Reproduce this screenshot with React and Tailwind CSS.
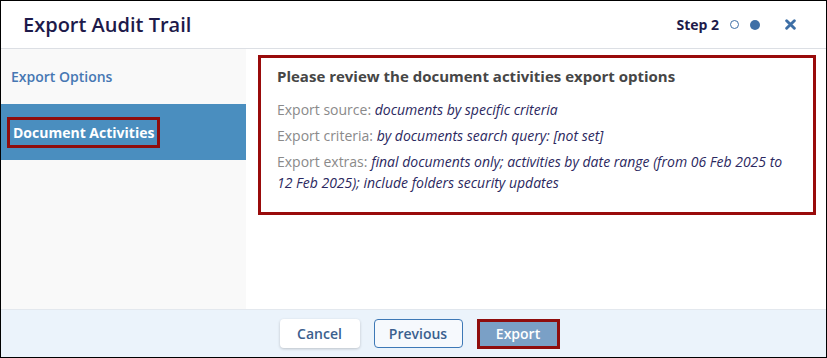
import React from "react";

const font = { fontFamily: "'Open Sans', 'Noto Sans', sans-serif" };

function Header() {
  return (
    <div className="flex h-[48px] items-center justify-between border-b border-[#dcdfe4] bg-white pl-[22px] pr-[30px]">
      <h1 className="text-[20px] font-semibold text-[#1d1a4a]">Export Audit Trail</h1>
      <div className="flex items-center">
        <span className="text-[14px] font-bold text-[#1d1a4a]">Step 2</span>
        <span className="ml-[11px] h-[9px] w-[9px] rounded-full border border-[#3e6fa6]" />
        <span className="ml-[11px] h-[10px] w-[10px] rounded-full bg-[#3e6fa6]" />
        <svg className="ml-[25px]" width="11" height="11" viewBox="0 0 10 10">
          <path d="M1.5 1.5 L8.5 8.5 M8.5 1.5 L1.5 8.5" stroke="#3e6fa6" strokeWidth="2.6" strokeLinecap="round" />
        </svg>
      </div>
    </div>
  );
}

function Sidebar() {
  return (
    <div className="flex w-[245px] flex-col bg-[#f9f9f9] pt-[17px]">
      <div className="pl-[10px] text-[14px] font-semibold text-[#4677b3]">Export Options</div>
      <div className="mt-[17px] flex h-[56px] items-center bg-[#4a8ebf] pl-[6px]">
        <span className="border-[3px] border-[#8f0d0d] px-[3px] py-[2px] text-[14px] font-bold text-white">
          Document Activities
        </span>
      </div>
    </div>
  );
}

function Row({ label, value }) {
  return (
    <p className="mt-[5px] text-[14px] leading-[21px] text-[#8a8a8a]">
      {label} <i className="text-[#2b2860]">{value}</i>
    </p>
  );
}

function Content() {
  return (
    <div className="flex-1 bg-white pl-[12px] pr-[10px] pt-[6px]">
      <div className="h-[160px] border-[3px] border-[#990b0b] pl-[16px] pr-[20px] pt-[7px]">
        <h2 className="mb-[11px] text-[15px] font-bold text-[#464646]">
          Please review the document activities export options
        </h2>
        <Row label="Export source:" value="documents by specific criteria" />
        <Row label="Export criteria:" value="by documents search query: [not set]" />
        <Row
          label="Export extras:"
          value="final documents only; activities by date range (from 06 Feb 2025 to 12 Feb 2025); include folders security updates"
        />
      </div>
    </div>
  );
}

function Footer() {
  return (
    <div className="flex h-[48px] items-center justify-center gap-[14px] border-t border-[#e3e8ee] bg-[#ebf3fb] pl-[12px]">
      <button className="h-[29px] w-[80px] rounded-[4px] bg-white text-[14px] font-semibold text-[#3b5f8e] shadow-[0_1px_3px_rgba(0,0,0,0.2)]">
        Cancel
      </button>
      <button className="h-[29px] w-[89px] rounded-[4px] border border-[#3d78b6] bg-[#f6f9fd] text-[14px] font-semibold text-[#3b5f8e]">
        Previous
      </button>
      <button className="h-[30px] w-[83px] border-[3px] border-[#8f0d0d] bg-[#7aa0c6] text-[14px] font-semibold text-white">
        Export
      </button>
    </div>
  );
}

export default function App() {
  return (
    <div style={font} className="flex h-[358px] w-[827px] flex-col border border-black bg-white">
      <Header />
      <div className="flex flex-1">
        <Sidebar />
        <Content />
      </div>
      <Footer />
    </div>
  );
}
